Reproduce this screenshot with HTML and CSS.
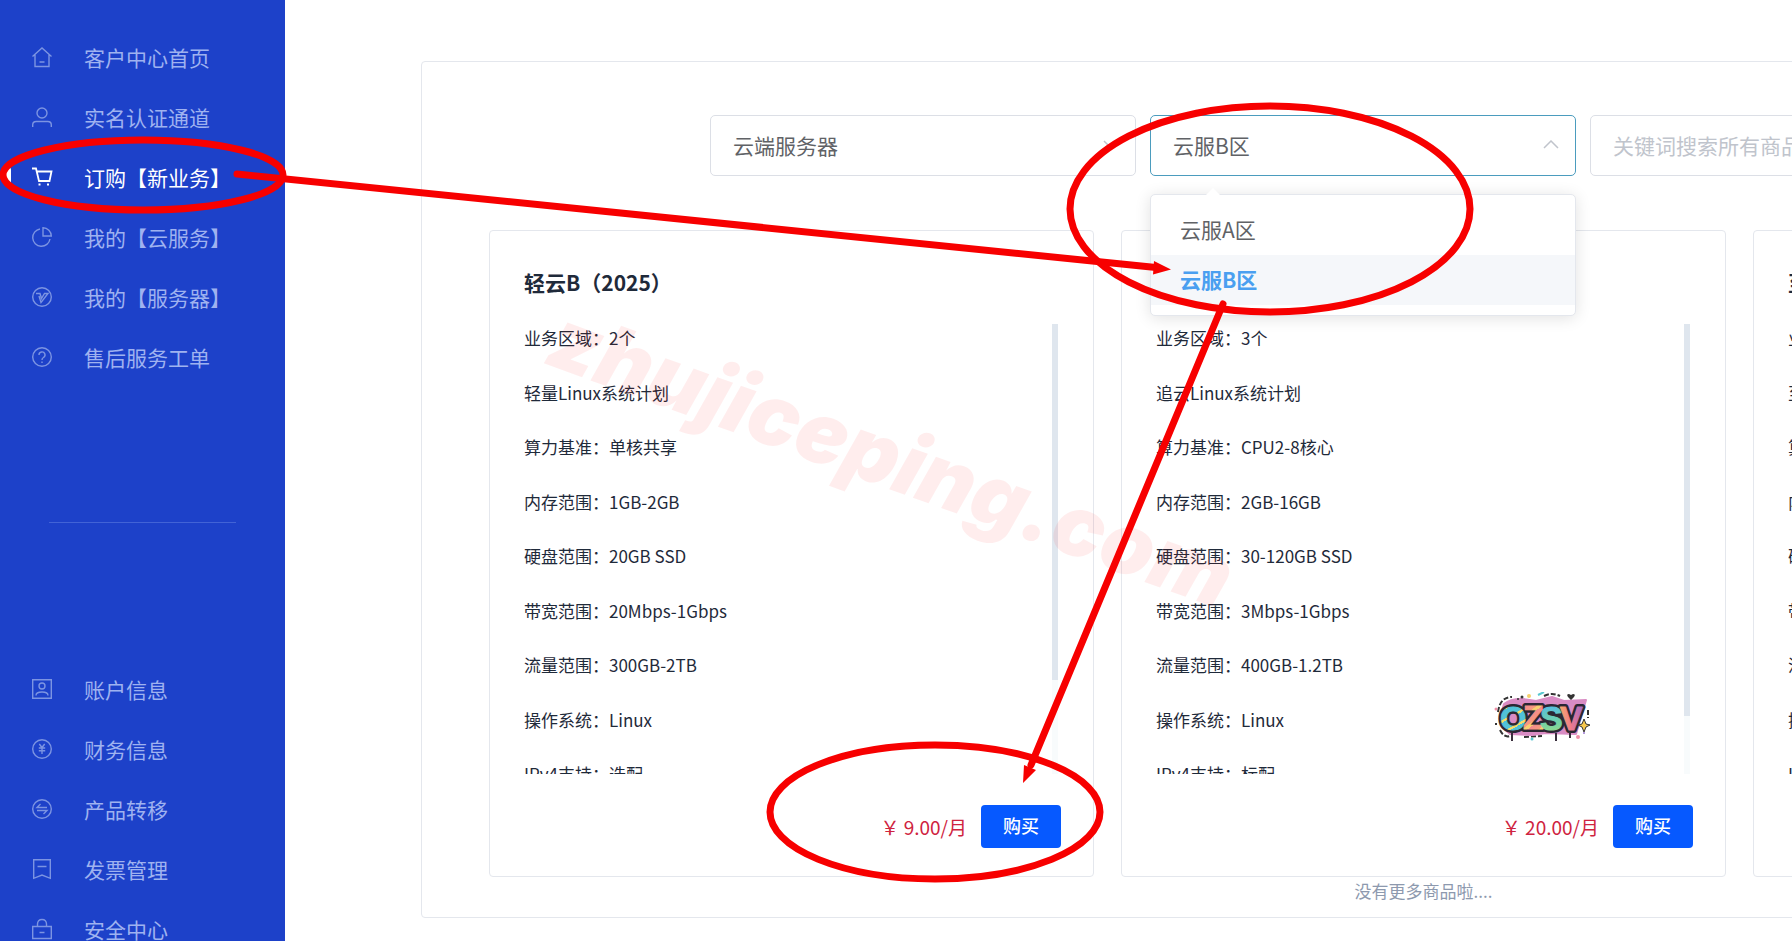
FILE: index.html
```html
<!DOCTYPE html>
<html lang="zh-CN">
<head>
    <meta charset="UTF-8">
    <title>订购新业务</title>
    <link rel="stylesheet" href="styles.css">
</head>
<body>
    <nav class="sidebar">
        <a class="nav-item" href="#">
            <svg class="icon" viewBox="0 0 20 20"><path d="M.5 9.500 10 1l9.500 8.500M3 7.500V19.500H17V7.500M7.500 15h5"/></svg>
            客户中心首页
        </a>
        <a class="nav-item" href="#">
            <svg class="icon" viewBox="0 0 20 20"><circle cx="10" cy="6" r="5"/><path d="M.7 20v-2q0-3.500 3.500-3.500h11.600q3.500 0 3.500 3.500v2"/></svg>
            实名认证通道
        </a>
        <a class="nav-item active" href="#">
            <svg class="icon" viewBox="0 0 20 20"><path d="M0 1.500h4L7 14h10.500L19.500 4.500H5"/><path d="M6.500 17.500h2M15 17.500h2"/></svg>
            订购【新业务】
        </a>
        <a class="nav-item" href="#">
            <svg class="icon" viewBox="0 0 20 20"><path d="M8 2a8.700 8.700 0 1 0 10 10"/><path d="M11 .7V9h8.300A8.300 8.300 0 0 0 11 .7z"/></svg>
            我的【云服务】
        </a>
        <a class="nav-item" href="#">
            <svg class="icon" viewBox="0 0 20 20"><circle cx="10" cy="10" r="9.300"/><path d="M4 6.500h4l1.500 5 3-5H16L9 15.500 7 9"/></svg>
            我的【服务器】
        </a>
        <a class="nav-item" href="#">
            <svg class="icon" viewBox="0 0 20 20"><circle cx="10" cy="10" r="9.300"/><path d="M7 8a3 3 0 1 1 4.500 2.500Q10 11.400 10 13M10 14.500v1.600"/></svg>
            售后服务工单
        </a>

        <hr class="nav-line">

        <a class="nav-item" href="#">
            <svg class="icon" viewBox="0 0 20 20"><path d="M.7.7h18.600v18.600H.7z"/><circle cx="10" cy="7" r="3"/><path d="M4 16.500q0-3.500 6-3.500t6 3.500"/></svg>
            账户信息
        </a>
        <a class="nav-item" href="#">
            <svg class="icon" viewBox="0 0 20 20"><circle cx="10" cy="10" r="9.300"/><path d="M7.300 5 10 8.500 12.700 5M10 8.500V15M6.800 9h6.400M6.800 11.700h6.400"/></svg>
            财务信息
        </a>
        <a class="nav-item" href="#">
            <svg class="icon" viewBox="0 0 20 20"><circle cx="10" cy="10" r="9.300"/><path d="M8.500 5 5 8.500h10M5 11.500h10L11.500 15"/></svg>
            产品转移
        </a>
        <a class="nav-item" href="#">
            <svg class="icon" viewBox="0 0 20 20"><path d="M1.700.7h16.600v18.600L10 16l-8.300 3.300zM5.500 7.500h9"/></svg>
            发票管理
        </a>
        <a class="nav-item" href="#">
            <svg class="icon" viewBox="0 0 20 20"><path d="M.7 7.500h18.600v12H.7zM5.500 7.500V5q0-4.500 4.500-4.500T14.500 5v2.500M7.500 13.500h5"/></svg>
            安全中心
        </a>
    </nav>

    <main class="main">
        <section class="panel">
            <div class="filters">
                <div class="field">
                    <select class="select" aria-label="产品分类">
                        <option>云端服务器</option>
                    </select>
                    <svg class="arrow" viewBox="0 0 16 9"><path d="M1 1l7 7 7-7"/></svg>
                </div>
                <div class="field">
                    <select class="select open" aria-label="产品分区">
                        <option>云服A区</option>
                        <option selected>云服B区</option>
                    </select>
                    <svg class="arrow" viewBox="0 0 16 9"><path d="M1 8l7-7 7 7"/></svg>
                    <ul class="dropdown">
                        <li class="option">云服A区</li>
                        <li class="option selected">云服B区</li>
                    </ul>
                </div>
                <div class="field">
                    <input class="select" type="text" aria-label="搜索" placeholder="关键词搜索所有商品">
                </div>
            </div>

            <div class="cards">
                <article class="card">
                    <h2 class="card-title">轻云B（2025）</h2>
                    <div class="card-body">
                        <ul class="specs">
                            <li>业务区域：2个</li>
                            <li>轻量Linux系统计划</li>
                            <li>算力基准：单核共享</li>
                            <li>内存范围：1GB-2GB</li>
                            <li>硬盘范围：20GB SSD</li>
                            <li>带宽范围：20Mbps-1Gbps</li>
                            <li>流量范围：300GB-2TB</li>
                            <li>操作系统：Linux</li>
                            <li>IPv4支持：选配</li>
                        </ul>
                        <div class="track"><div class="thumb" style="height: 79%"></div></div>
                    </div>
                    <div class="card-foot">
                        <span class="price">￥ 9.00/月</span>
                        <button class="buy">购买</button>
                    </div>
                </article>

                <article class="card">
                    <h2 class="card-title">追云B（2025）</h2>
                    <div class="card-body">
                        <ul class="specs">
                            <li>业务区域：3个</li>
                            <li>追云Linux系统计划</li>
                            <li>算力基准：CPU2-8核心</li>
                            <li>内存范围：2GB-16GB</li>
                            <li>硬盘范围：30-120GB SSD</li>
                            <li>带宽范围：3Mbps-1Gbps</li>
                            <li>流量范围：400GB-1.2TB</li>
                            <li>操作系统：Linux</li>
                            <li>IPv4支持：标配</li>
                        </ul>
                        <div class="track"><div class="thumb" style="height: 87%"></div></div>
                    </div>
                    <div class="card-foot">
                        <span class="price">￥ 20.00/月</span>
                        <button class="buy">购买</button>
                    </div>
                </article>

                <article class="card">
                    <h2 class="card-title">至云B</h2>
                    <div class="card-body">
                        <ul class="specs">
                            <li>业务区域</li>
                            <li>至云Linux</li>
                            <li>算力基准</li>
                            <li>内存范围</li>
                            <li>硬盘范围</li>
                            <li>带宽范围</li>
                            <li>流量范围</li>
                            <li>操作系统</li>
                            <li>IPv4支持</li>
                        </ul>
                    </div>
                </article>
            </div>
            <p class="more">没有更多商品啦....</p>
        </section>
    </main>

    <!-- 浮动标志 -->
    <svg class="logo" viewBox="0 0 96 50">
        <defs>
            <linearGradient id="gO" x1="0" y1="0" x2="5" y2="9" gradientUnits="userSpaceOnUse" spreadMethod="repeat">
                <stop offset="0" stop-color="#4fc0da"/><stop offset=".75" stop-color="#55c3d6"/><stop offset=".8" stop-color="#f5dc6a"/><stop offset="1" stop-color="#f5dc6a"/>
            </linearGradient>
            <linearGradient id="gZ" x1="0" y1="0" x2="6" y2="8" gradientUnits="userSpaceOnUse" spreadMethod="repeat">
                <stop offset="0" stop-color="#f58a8e"/><stop offset=".65" stop-color="#f79a7c"/><stop offset=".7" stop-color="#f8d070"/><stop offset="1" stop-color="#f8d070"/>
            </linearGradient>
            <linearGradient id="gS" x1="0" y1="0" x2="0" y2="1">
                <stop offset=".2" stop-color="#58bfe0"/><stop offset=".6" stop-color="#6fd0a8"/><stop offset="1" stop-color="#a5dd80"/>
            </linearGradient>
            <linearGradient id="gV" x1="0" y1="0" x2="1" y2="0">
                <stop offset="0" stop-color="#f7a86c"/><stop offset=".5" stop-color="#ee7a8c"/><stop offset="1" stop-color="#a06cd0"/>
            </linearGradient>
        </defs>
        <path class="ring" d="M4 20Q6 5 18 5M50 4q8-4 16 0M6 38q4 8 10 6M30 45l18-1M94 18v8M2 31v2"/>
        <path class="glow" d="M10 12Q20 4 42 9L58 5l12 4 22-1-10 34-30-1-14 2-22-1Q5 34 7 22z"/>
        <g class="ink">
            <text x="6" y="38">O</text>
            <text x="29" y="37">Z</text>
            <text x="46" y="38">S</text>
            <text x="66" y="38">V</text>
        </g>
        <g>
            <text x="6" y="38" fill="url(#gO)" stroke="url(#gO)">O</text>
            <text x="29" y="37" fill="url(#gZ)" stroke="url(#gZ)">Z</text>
            <text x="46" y="38" fill="url(#gS)" stroke="url(#gS)">S</text>
            <text x="66" y="38" fill="url(#gV)" stroke="url(#gV)">V</text>
        </g>
        <path class="drip" d="M18 41v8M62 41v8M76 40v6"/>
        <path d="M74 5q-2-3 1-3l2 1 2-1q3 0 1 3l-3 3z" fill="#333"/>
        <path d="M90 27l2 5 4 1-4 2-2 5-2-5-4-2 4-1z" fill="#f7c84c" stroke="#333"/>
        <path d="M44 3l6-3" stroke="#58c8d0" stroke-width="2"/>
        <circle cx="35" cy="4" r="2" fill="#f6d06c"/><circle cx="28" cy="5" r="1.500" fill="#333"/><circle cx="24" cy="7" r="1" fill="#333"/>
        <circle cx="38" cy="47" r="1.500" fill="#58c8d0"/><circle cx="84" cy="45" r="2" fill="#ef8fa8"/><circle cx="2" cy="17" r="1.500" fill="#ef8fa8"/><circle cx="90" cy="41" r="1" fill="#9b78d0"/>
    </svg>

    <!-- 标注层 -->
    <svg class="marks" width="1792" height="941" viewBox="0 0 1792 941">
        <text class="watermark" transform="translate(543 363) rotate(20)">zhujiceping.com</text>
        <ellipse cx="143" cy="175" rx="140" ry="35"/>
        <ellipse cx="1270" cy="209" rx="200" ry="103"/>
        <ellipse cx="935" cy="812" rx="165" ry="67"/>
        <path d="M237 174 1156 267.500M1223 304 1031 765"/>
        <path class="head" d="M1171 269.500 1153 274.500 1154 261zM1023 783 1024 765 1036 770z"/>
    </svg>
</body>
</html>
```
FILE: styles.css
```css
* {
    box-sizing: border-box;
}

body {
    display: flex;
    height: 100vh;
    margin: 0;
    overflow: hidden;
    background: #fff;
    color: #1f2a3a;
    font-family: "Noto Sans CJK SC", sans-serif;
}

ul {
    margin: 0;
    padding: 0;
    list-style: none;
}

/* 左侧菜单 */
.sidebar {
    flex: none;
    width: 285px;
    height: 100vh;
    padding-top: 27px;
    overflow: hidden;
    background: #1d41c9;
}

.nav-item {
    position: relative;
    display: flex;
    align-items: center;
    gap: 32px;
    height: 60px;
    padding-left: 32px;
    color: #9fb2f0;
    font-size: 21px;
    text-decoration: none;
    white-space: nowrap;
}

.nav-item.active {
    color: #fff;
}

.nav-item.active::before {
    content: "";
    position: absolute;
    left: 4px;
    top: 20px;
    width: 7px;
    height: 18px;
    border-radius: 3px;
    background: #fff;
}

.icon {
    flex: none;
    width: 20px;
    height: 20px;
    overflow: visible;
    fill: none;
    stroke: #7c94e2;
    stroke-width: 1.4;
}

.active .icon {
    stroke: #fff;
    stroke-width: 1.8;
}

.nav-line {
    height: 1px;
    margin: 135px 49px 136px;
    border: none;
    background: #4263d6;
}

/* 主区域 */
.main {
    flex: 1;
    min-width: 0;
    padding: 61px 0 0 136px;
    overflow: hidden;
}

.panel {
    min-width: 2005px;
    padding: 53px 67px 12px;
    border: 1px solid #e4e7ed;
    border-radius: 4px;
}

.filters {
    display: flex;
    gap: 14px;
    margin-bottom: 54px;
    padding-left: 221px;
}

.field {
    position: relative;
    width: 426px;
}

.select {
    display: block;
    width: 100%;
    height: 61px;
    padding: 0 22px 2px;
    border: 1px solid #dcdfe6;
    border-radius: 5px;
    background: #fff;
    color: #606266;
    font-family: inherit;
    font-size: 21px;
    appearance: none;
    outline: none;
}

.select.open {
    border-color: #4b9cbe;
}

.select::placeholder {
    color: #c0c4cc;
}

.arrow {
    position: absolute;
    right: 17px;
    top: 25px;
    width: 16px;
    height: 9px;
    fill: none;
    stroke: #c0c4cc;
    stroke-width: 1.5;
}

/* 下拉列表 */
.dropdown {
    position: absolute;
    z-index: 2;
    top: 79px;
    left: 0;
    width: 100%;
    padding: 10px 0;
    border: 1px solid #e4e7ed;
    border-radius: 5px;
    background: #fff;
    box-shadow: 0 2px 16px rgba(0, 0, 0, 0.12);
}

.dropdown::before {
    content: "";
    position: absolute;
    left: 54px;
    top: -7px;
    border: 8px solid transparent;
    border-top: none;
    border-bottom-color: #fff;
}

.option {
    height: 50px;
    padding-left: 29px;
    color: #606266;
    font-size: 21px;
    line-height: 49px;
}

.option.selected {
    background: #f5f7fa;
    color: #4a9ff0;
    font-weight: bold;
}

/* 商品卡片 */
.cards {
    display: grid;
    grid-template-columns: repeat(3, 1fr);
    gap: 27px;
}

.card {
    padding: 36px 32px 28px 34px;
    border: 1px solid #e4e7ed;
    border-radius: 4px;
}

.card-title {
    margin: 0 0 27px;
    font-size: 21px;
    line-height: 30px;
}

.card-body {
    display: flex;
    justify-content: space-between;
    height: 450px;
    padding-right: 3px;
    overflow: hidden;
}

.specs {
    display: flex;
    flex-direction: column;
    justify-content: space-between;
    height: 464px;
    font-size: 17px;
    line-height: 28px;
}

.track {
    width: 6px;
    background: #f8fbfc;
}

.thumb {
    background: #dfe6ee;
}

.card-foot {
    display: flex;
    justify-content: flex-end;
    align-items: flex-end;
    gap: 14px;
    margin-top: 31px;
}

.price {
    color: #cf2340;
    font-size: 19px;
    line-height: 42px;
}

.buy {
    width: 80px;
    height: 43px;
    padding: 0 0 4px;
    border: none;
    border-radius: 4px;
    background: #0659ff;
    color: #fff;
    font-family: inherit;
    font-size: 18px;
    font-weight: 500;
}

.more {
    margin: 0;
    color: #8d99ae;
    font-size: 17px;
    line-height: 28px;
    text-align: center;
}

/* 浮动标志 */
.logo {
    position: absolute;
    left: 1494px;
    top: 692px;
    width: 96px;
    height: 50px;
    font: bold 34px "Liberation Sans", sans-serif;
    stroke-linejoin: round;
}

.logo .ring {
    fill: none;
    stroke: #333;
    stroke-width: 2;
    stroke-dasharray: 5 2;
}

.logo .glow {
    fill: #d98cc4;
    stroke: #d98cc4;
    stroke-width: 2;
}

.logo .ink {
    fill: #2b2733;
    stroke: #2b2733;
    stroke-width: 6;
}

.logo .drip {
    stroke: #3a2f3d;
    stroke-width: 2;
}

/* 红色标注 */
.marks {
    position: absolute;
    left: 0;
    top: 0;
    z-index: 5;
    pointer-events: none;
    fill: none;
    stroke: #f70000;
    stroke-width: 7;
    stroke-linecap: round;
}

.marks .head {
    fill: #f70000;
    stroke: none;
}

.marks .watermark {
    fill: rgba(255, 0, 0, 0.07);
    stroke: none;
    font: italic 900 85px "Inter", sans-serif;
}
```
